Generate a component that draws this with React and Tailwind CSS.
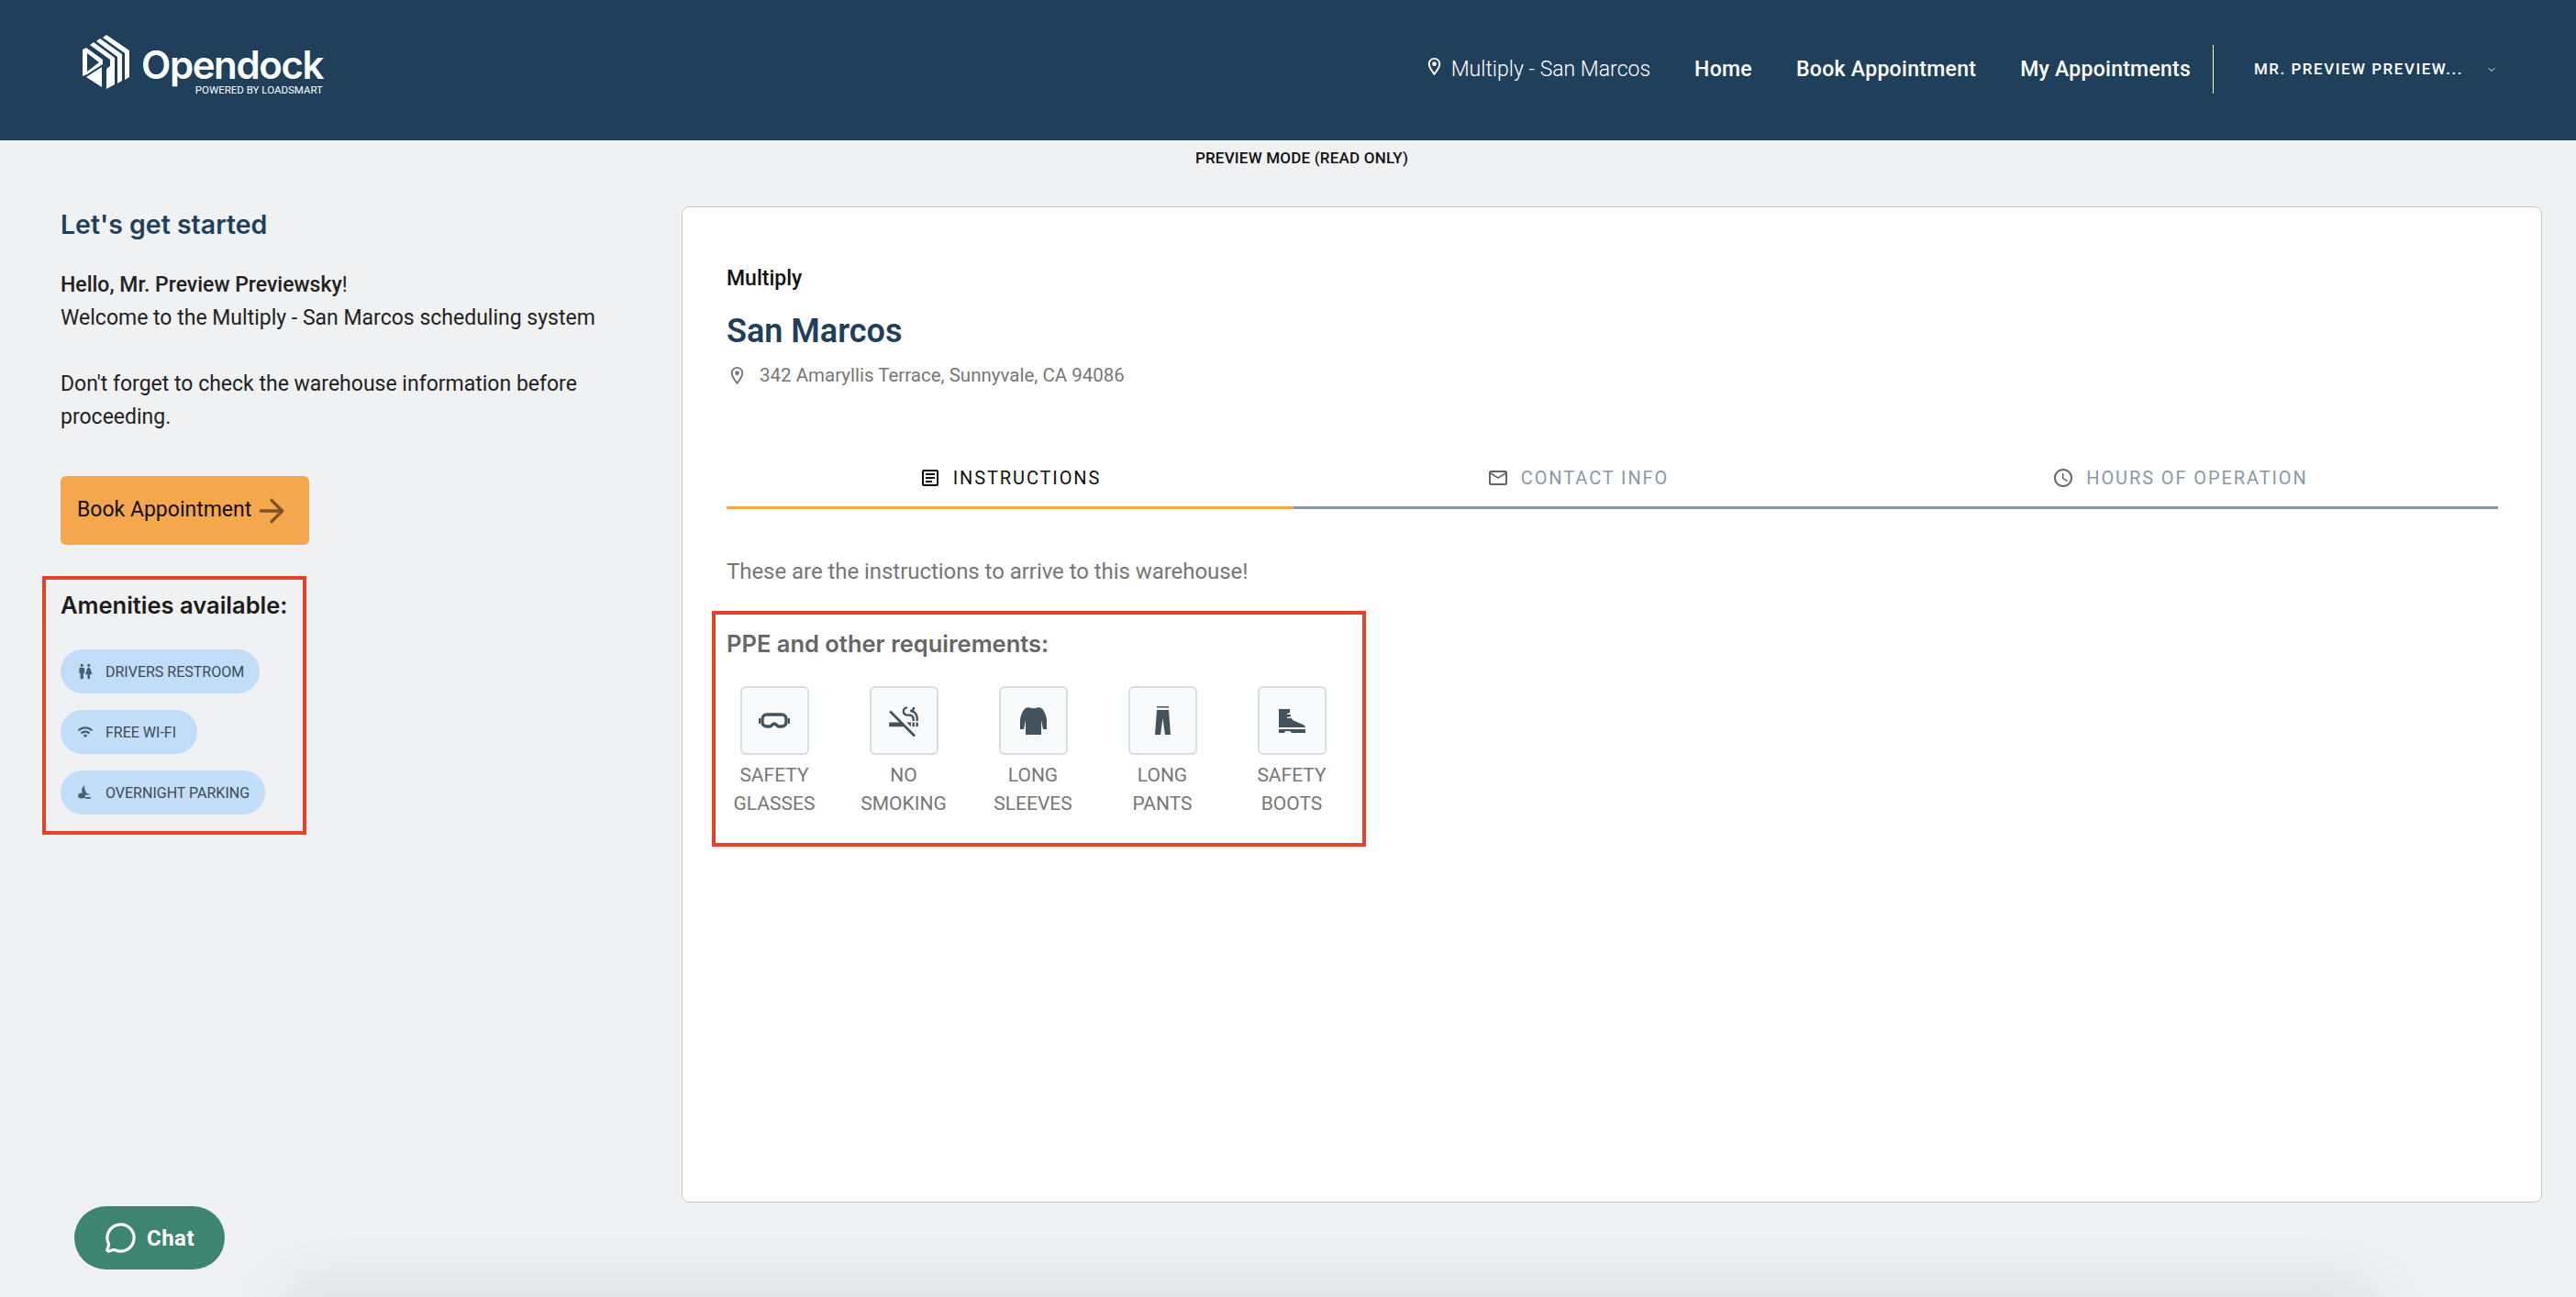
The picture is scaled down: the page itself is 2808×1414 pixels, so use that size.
import { ArrowRight, ChevronDown, MessageCircle } from "lucide-react";
import { MdOutlineLocationOn, MdOutlineArticle, MdMailOutline, MdAccessTime, MdWc, MdWifi, MdSmokeFree } from "react-icons/md";

const Logo = () => (
  <svg width="51" height="59" viewBox="0 0 51 59" fill="#fff">
    <polygon points="22,3 26,0 51,17 51,46 46,49 46,20" />
    <polygon points="15,7 19,4 43,21 43,50 38,53 38,24" />
    <polygon points="8,11 12,8 35,25 35,54 26,59 26,37 30,34 30,27" />
    <polygon points="0,16 4,14 22,27 22,32 5,43 0,45 0,16 5,20 5,40 18,30 5,20" fillRule="evenodd" />
    <polygon points="4,46 21,35 21,57" />
  </svg>
);

const Goggles = () => (
  <svg width="34" height="18" viewBox="0 0 34 18" fill="none">
    <path d="M9 2h16c3 0 5 2 5 5v3c0 3-2 5-5 5h-3c-2 0-3-3-5-3s-3 3-5 3H9c-3 0-5-2-5-5V7c0-3 2-5 5-5z" stroke="#42535e" strokeWidth="3.4" />
    <rect x="0" y="6" width="2" height="6" fill="#42535e" />
    <rect x="32" y="6" width="2" height="6" fill="#42535e" />
  </svg>
);

const Sleeves = () => (
  <svg width="29" height="30" viewBox="0 0 29 30" fill="#42535e">
    <path d="M9 0c2 1.500 9 1.500 11 0l3 1c3 2 5 7 6 12v11h-4l-2-10v16H6V14L4 24H0V13C1 8 3 3 6 1z" />
  </svg>
);

const Pants = () => (
  <svg width="17" height="31" viewBox="0 0 17 31" fill="#42535e">
    <rect x="2" y="0" width="13" height="1.500" />
    <path d="M2 4h13l2 27h-6L8.500 13 6 31H0z" />
  </svg>
);

const Boots = () => (
  <svg width="29" height="26" viewBox="0 0 29 26" fill="#42535e">
    <path d="M0 0h12v4l-3 1v1l4 0v2l-4 1v1l5 0 1 2 9 4c3 1 5 2 5 4H0z" />
    <path d="M0 22h29v4H14l-2-2H7l-1 2H0z" />
  </svg>
);

const MoonIcon = () => (
  <svg width="14" height="16" viewBox="0 0 14 16" fill="#4a6070">
    <path d="M7 0C4 3 3 7 6 10c2 1 5 1 8 0-3 0-5-1-6-4C7 4 7 2 7 0z" />
    <ellipse cx="4" cy="11.500" rx="4" ry="3" />
    <path d="M6 13h8v1.500c-3 1-6 .5-8-1.500z" />
  </svg>
);

const amenities = [
  { label: "Drivers Restroom", icon: <MdWc className="-ml-[2px] text-[20px] text-[#4a6070]" />, width: "w-[217px]" },
  { label: "Free Wi-Fi", icon: <MdWifi className="-ml-[1px] text-[18px] text-[#4a6070]" />, width: "w-[149px]" },
  { label: "Overnight Parking", icon: <MoonIcon />, width: "w-[223px]" },
];

const requirements = [
  { top: "Safety", bottom: "Glasses", icon: <Goggles /> },
  { top: "No", bottom: "Smoking", icon: <MdSmokeFree className="text-[38px] text-[#42535e]" /> },
  { top: "Long", bottom: "Sleeves", icon: <Sleeves /> },
  { top: "Long", bottom: "Pants", icon: <Pants /> },
  { top: "Safety", bottom: "Boots", icon: <Boots /> },
];

const tabs = [
  { label: "Instructions", icon: <MdOutlineArticle className="text-[24px] text-[#111]" />, active: true },
  { label: "Contact Info", icon: <MdMailOutline className="text-[24px] text-[#666]" /> },
  { label: "Hours of Operation", icon: <MdAccessTime className="text-[24px] text-[#666]" /> },
];

const App = () => {
  return (
    <div className="relative h-[1414px] overflow-hidden bg-[#f0f1f3] font-[Roboto,sans-serif] text-[#222]">
      {/* Header */}
      <header className="flex h-[153px] items-center justify-between bg-[#1f3f5b] pl-[90px] pr-[86px] text-white">
        <div className="mb-[18px] flex items-center gap-[13px]">
          <Logo />
          <div className="mt-[20px] flex flex-col items-end">
            <span className="font-[Inter,sans-serif] text-[42px] font-semibold leading-[40px] tracking-[-1.4px]">Opendock</span>
            <span className="text-[11.500px] leading-[14px]">POWERED BY LOADSMART</span>
          </div>
        </div>
        <nav className="mb-[2px] flex items-center">
          <MdOutlineLocationOn className="mb-[6px] mr-[7px] text-[23px]" />
          <span className="mr-[48px] text-[23px] font-light leading-[30px]">Multiply - San Marcos</span>
          <span className="mr-[48px] text-[23px] font-medium leading-[30px] tracking-[0.3px]">Home</span>
          <span className="mr-[48px] text-[23px] font-medium leading-[30px] tracking-[0.3px]">Book Appointment</span>
          <span className="text-[23px] font-medium leading-[30px] tracking-[0.25px]">My Appointments</span>
          <div className="ml-[24px] mr-[44px] h-[53px] w-px bg-white" />
          <div className="flex w-[265px] items-center justify-between">
            <span className="text-[17px] font-medium tracking-[1.500px]">MR. PREVIEW PREVIEW...</span>
            <ChevronDown className="h-[12px] w-[12px]" />
          </div>
        </nav>
      </header>

      <div className="h-[38px] pl-[30px] text-center text-[17px] font-medium leading-[38px] tracking-[0.2px] text-[#111]">PREVIEW MODE (READ ONLY)</div>

      <main className="mt-[34px] flex pl-[66px] pr-[37px]">
        {/* Left column */}
        <aside className="w-[677px] shrink-0">
          <h2 className="font-[Inter,sans-serif] text-[28.500px] font-semibold leading-[40px] text-[#1f3f5b]">Let's get started</h2>
          <p className="mt-[28px] text-[23px] leading-[36px]">
            <span className="font-medium">Hello, Mr. Preview Previewsky</span>!
            <br />
            Welcome to the Multiply - San Marcos scheduling system
          </p>
          <p className="mt-[36px] w-[590px] text-[23px] leading-[36px]">
            Don't forget to check the warehouse information before proceeding.
          </p>
          <button className="mt-[46px] flex h-[75px] w-[271px] items-center gap-[2px] rounded-[6px] bg-[#f4a74c] pl-[18px] text-[23px] text-[#111]">
            Book Appointment
            <ArrowRight className="h-[40px] w-[40px] text-[#7a5426]" />
          </button>

          <section className="-ml-[20px] mt-[34px] w-[288px] border-4 border-[#e8402a] pb-[18px] pl-[16px] pt-[12px]">
            <h3 className="mb-[32px] whitespace-nowrap font-[Inter,sans-serif] text-[25.500px] font-semibold leading-[32px] text-[#1c1c1c]">Amenities available:</h3>
            <div className="flex flex-col gap-[18px]">
              {amenities.map((item) => (
                <div key={item.label} className={`flex h-[48px] items-center rounded-full bg-[#c1ddf7] pl-[19px] ${item.width}`}>
                  <span className="flex w-[30px] shrink-0">{item.icon}</span>
                  <span className="whitespace-nowrap pt-[2px] text-[16px] uppercase text-[#3d4a55]">{item.label}</span>
                </div>
              ))}
            </div>
          </section>
        </aside>

        {/* Warehouse card */}
        <section className="h-[1086px] w-[2028px] rounded-[8px] border border-[#c8c8c8] bg-white pl-[48px] pr-[47px] pt-[63px]">
          <div className="text-[23px] font-medium leading-[30px] text-[#111]">Multiply</div>
          <h1 className="mt-[19px] text-[36px] font-semibold leading-[46px] text-[#1f3f5b]">San Marcos</h1>
          <div className="mt-[11px] flex items-center text-[20.500px] leading-[28px] text-[#777]">
            <MdOutlineLocationOn className="mr-[13px] text-[23px]" />
            342 Amaryllis Terrace, Sunnyvale, CA 94086
          </div>

          <div className="mt-[67px] grid grid-cols-[618px_620px_1fr]">
            {tabs.map((tab) => (
              <div
                key={tab.label}
                className={`flex h-[65px] items-center justify-center gap-[13px] border-b-[3px] pb-[1px] ${tab.active ? "border-[#f4a74c]" : "border-[#8a9aa5]"}`}
              >
                {tab.icon}
                <span className={`text-[20px] uppercase tracking-[1.900px] ${tab.active ? "text-[#111]" : "text-[#8a9aa5]"}`}>{tab.label}</span>
              </div>
            ))}
          </div>

          <p className="mt-[50px] text-[24px] leading-[36px] tracking-[-0.05px] text-[#777]">These are the instructions to arrive to this warehouse!</p>

          <div className="-ml-[16px] mt-[25px] w-[713px] border-4 border-[#e8402a] pb-[27px] pl-[12px] pt-[16px]">
            <h3 className="mb-[30px] whitespace-nowrap font-[Inter,sans-serif] text-[25.500px] font-semibold leading-[32px] text-[#666]">PPE and other requirements:</h3>
            <div className="ml-[7px] flex gap-[51px]">
              {requirements.map((req) => (
                <div key={req.bottom} className="flex w-[90px] flex-col items-center">
                  <div className="flex h-[75px] w-[75px] items-center justify-center rounded-[6px] border-2 border-[#d8dfe3] bg-[#f8fafc]">
                    {req.icon}
                  </div>
                  <div className="mt-[7px] text-center text-[21px] uppercase leading-[31px] text-[#777]">
                    {req.top}
                    <br />
                    {req.bottom}
                  </div>
                </div>
              ))}
            </div>
          </div>
        </section>
      </main>

      {/* Bottom shadow */}
      <div className="absolute bottom-[-45px] left-[300px] h-[60px] w-[2300px] rounded-full bg-[#dddee0] blur-[30px]" />

      {/* Chat button */}
      <button className="absolute left-[81px] top-[1315px] flex h-[69px] w-[164px] items-center justify-center gap-[11px] rounded-full bg-[#3d8571] text-[24px] font-bold tracking-[0.5px] text-white">
        <MessageCircle className="h-[35px] w-[35px]" strokeWidth={2.2} />
        Chat
      </button>
    </div>
  );
};

export default App;
